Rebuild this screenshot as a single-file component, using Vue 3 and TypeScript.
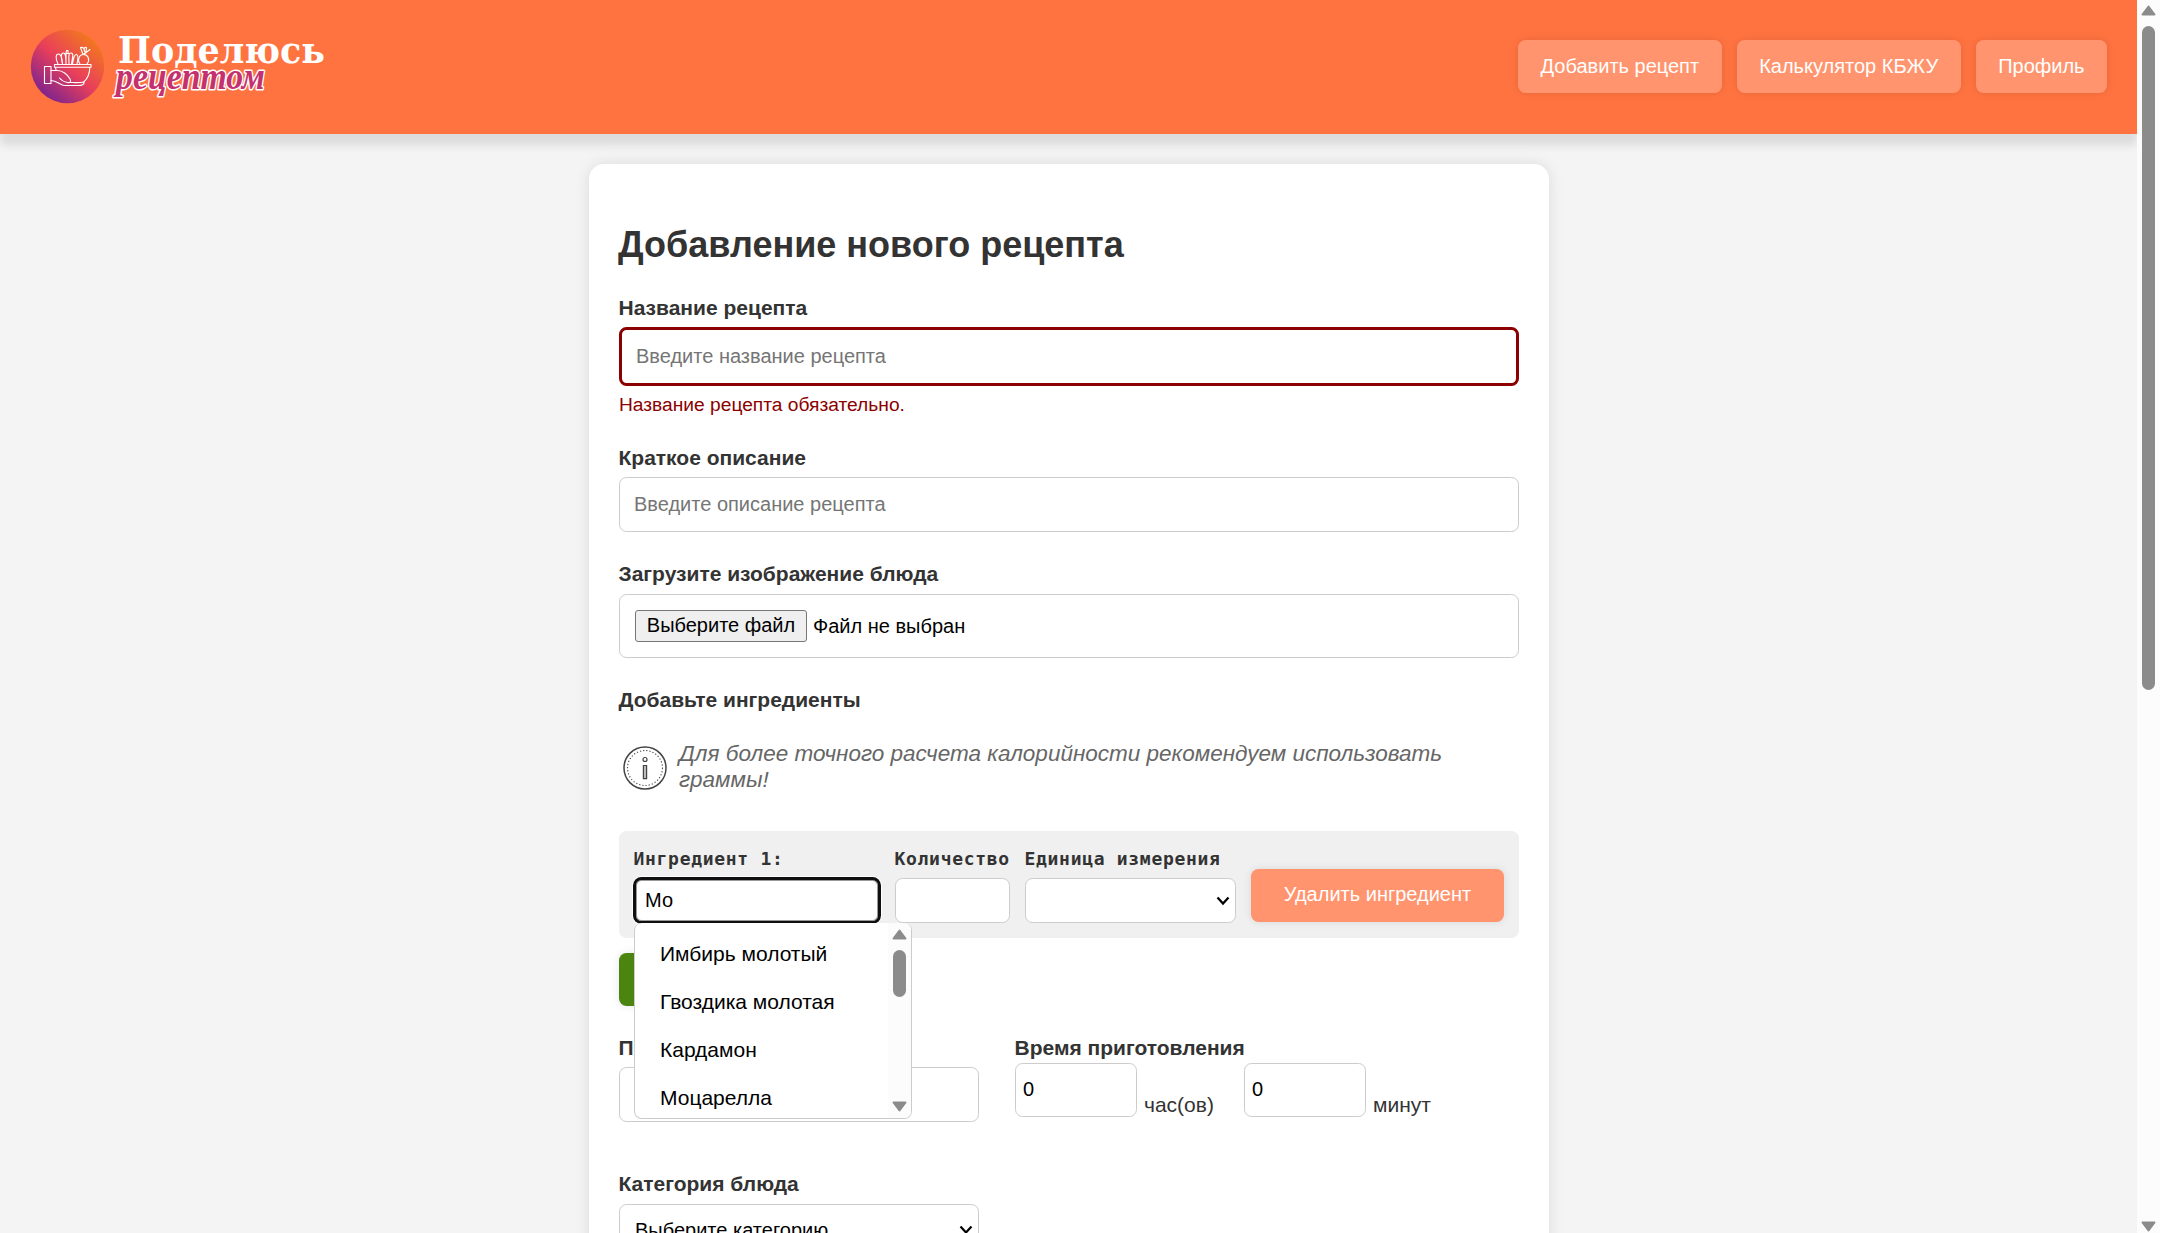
<script setup lang="ts">
import { ref } from 'vue'

const nav = ref<string[]>(['Добавить рецепт', 'Калькулятор КБЖУ', 'Профиль'])
const suggestions = ref<string[]>(['Имбирь молотый', 'Гвоздика молотая', 'Кардамон', 'Моцарелла'])
const query = ref('Мо')
const hours = ref('0')
const minutes = ref('0')
</script>

<template>
  <div class="window">
    <main class="page">
      <header class="header">
        <svg class="logo" width="310" height="84" viewBox="24 24 310 84">
          <defs>
            <linearGradient id="lg" x1="0.15" y1="0.9" x2="0.85" y2="0.1">
              <stop offset="0" stop-color="#7a2390" />
              <stop offset="0.5" stop-color="#e93f5a" />
              <stop offset="1" stop-color="#f27a1c" />
            </linearGradient>
          </defs>
          <circle cx="67.5" cy="66.5" r="36.7" fill="url(#lg)" />
          <g fill="none" stroke="#fff" stroke-width="1.1" stroke-linejoin="round" stroke-linecap="round">
            <path d="M44.500 66.500h6.500v17h-6.500z" />
            <path d="M51 70.500h6.500c5 0 10 4 12.500 8.500c1.500 3 0 4-2.500 3.500c-3-.5-6-2-8-4.500M51 80.500c6.500 0 9 5 14 5h13c4 0 6.500-1 6-3.500c-5 1-10 .5-15 .5" />
            <path d="M54.500 64.500h36.500v2.700H54.500zM55.500 67.200l.5 3M89.800 67.200c0 6-2 11-6 14.800" />
            <path d="M58 64c-3-6-2-10 .5-10s4 5 4 10M62.500 64c-2-7-1.500-11 1-11s2.500 5 2.500 11M66 64V53.500M66 53.500l.5-3h1.500v3M66 53.500h3M69 64c0-7-1-11 2-11s1.500 5 .5 11M72.500 64c1-6 2-10 4-9.500s1.500 5 .5 9.500" />
            <path d="M80 64c-3-4-1-9.500 3.500-9.500s7 5 3.500 9.500M83 54.500l-2.500-7c3-.5 4 1 4 4c-1-3 0-4.500 2-4c0 3-.5 5-3 7l6.500-5" />
          </g>
          <text class="brand" x="118" y="62.500" textLength="207" lengthAdjust="spacingAndGlyphs">Поделюсь</text>
          <text class="script" x="116" y="89" textLength="149" lengthAdjust="spacingAndGlyphs">рецептом</text>
        </svg>
        <nav class="nav">
          <a v-for="n in nav" :key="n" class="btn">{{ n }}</a>
        </nav>
      </header>

      <form class="card">
        <h2>Добавление нового рецепта</h2>

        <label>Название рецепта</label>
        <input class="field invalid" placeholder="Введите название рецепта" />
        <p class="error">Название рецепта обязательно.</p>

        <label>Краткое описание</label>
        <input class="field desc" placeholder="Введите описание рецепта" />

        <label>Загрузите изображение блюда</label>
        <div class="file"><span class="file-btn">Выберите файл</span><span class="file-name">Файл не выбран</span></div>

        <label class="ing-title">Добавьте ингредиенты</label>
        <div class="info">
          <svg width="46" height="46" viewBox="0 0 46 46" fill="none" stroke="#444">
            <circle cx="23" cy="23" r="21" stroke-width="1.500" />
            <circle cx="23" cy="23" r="17.500" stroke-width="1.100" stroke-dasharray="1.200 2" />
            <circle cx="23" cy="14.500" r="2" stroke-width="1.200" />
            <path d="M21.400 20.500h3.200v13.200h-3.200z" fill="#bbb" stroke-width="1.200" />
          </svg>
          <p>Для более точного расчета калорийности рекомендуем использовать граммы!</p>
        </div>

        <section class="row">
          <div class="col c1">
            <label>Ингредиент 1:</label>
            <input v-model="query" class="small focused" />
            <div class="menu">
              <ul>
                <li v-for="s in suggestions" :key="s">{{ s }}</li>
              </ul>
              <div class="bar">
                <svg width="15" height="11" viewBox="0 0 15 11"><path d="M7.500 1.500L13.500 9.500H1.500z" /></svg>
                <i class="thumb"></i>
                <svg width="15" height="11" viewBox="0 0 15 11"><path d="M7.500 9.500L13.500 1.500H1.500z" /></svg>
              </div>
            </div>
          </div>
          <div class="col c2">
            <label>Количество</label>
            <input class="small" />
          </div>
          <div class="col c3">
            <label>Единица измерения</label>
            <div class="small select">
              <svg width="14" height="10" viewBox="0 0 14 10"><path d="M1.500 1.500L7 7.500L12.500 1.500" /></svg>
            </div>
          </div>
          <button type="button" class="delete">Удалить ингредиент</button>
        </section>

        <button type="button" class="add" aria-label="Добавить ингредиент"></button>

        <section class="two">
          <div class="portions">
            <label>Порции</label>
            <input class="field" />
          </div>
          <div class="time">
            <label>Время приготовления</label>
            <div class="time-row">
              <input v-model="hours" class="num" /><span class="unit h">час(ов)</span>
              <input v-model="minutes" class="num" /><span class="unit">минут</span>
            </div>
          </div>
        </section>

        <label class="cat-label">Категория блюда</label>
        <div class="category">
          <span>Выберите категорию</span>
          <svg width="14" height="10" viewBox="0 0 14 10"><path d="M1.500 1.500L7 7.500L12.500 1.500" /></svg>
        </div>
      </form>
    </main>

    <aside class="page-bar">
      <svg width="15" height="11" viewBox="0 0 15 11"><path d="M7.500 1.500L13.500 9.500H1.500z" /></svg>
      <i class="page-thumb"></i>
      <svg class="down" width="15" height="11" viewBox="0 0 15 11"><path d="M7.500 9.500L13.500 1.500H1.500z" /></svg>
    </aside>
  </div>
</template>

<style>
html, body { margin: 0; overflow: hidden; }
</style>

<style scoped>
* { box-sizing: border-box; }
.window {
  display: flex;
  width: 2160px;
  height: 1233px;
  overflow: hidden;
  background: #f4f4f4;
  font-family: "Liberation Sans", Arial, sans-serif;
  font-size: 20px;
  color: #333;
}
.page { flex: 1; overflow: hidden; }
.header {
  height: 134px;
  display: flex;
  justify-content: space-between;
  padding: 0 30px 0 24px;
  background: #ff7340;
  box-shadow: 0 11px 9px rgba(0, 0, 0, .1);
}
.logo { margin-top: 24px; overflow: visible; }
.brand { font: 700 38px "DejaVu Serif", serif; fill: #fff; }
.script {
  font: italic 700 37px "Liberation Serif", serif;
  fill: #c4316e;
  stroke: #fff;
  stroke-width: 3px;
  paint-order: stroke;
  stroke-linejoin: round;
}
.nav { display: flex; gap: 15px; padding-top: 40px; }
.btn, .delete, .add {
  height: 53px;
  border: 0;
  border-radius: 7.5px;
  background: #ff946e;
  color: #fff;
  font: 20px/52px "Liberation Sans", Arial, sans-serif;
  text-align: center;
  box-shadow: 0 0 9px rgba(0, 0, 0, .1);
}
.btn { padding: 0 22.5px; white-space: nowrap; }
.card {
  width: 960px;
  height: 1200px;
  margin: 30px 0 0 589px;
  padding: 0 30px;
  border-radius: 15px;
  background: #fff;
  box-shadow: 0 0 15px rgba(0, 0, 0, .1);
}
h2 { margin: 0 0 0 -1px; padding-top: 60px; font-size: 36px; line-height: 41px; height: 132px; }
label { display: block; margin-left: -.5px; font-size: 21px; font-weight: 700; line-height: 24px; white-space: nowrap; }
input { display: block; font: 20px "Liberation Sans", Arial, sans-serif; color: #000; outline: 0; background: #fff; }
input::placeholder { color: #757575; opacity: 1; }
.field { width: 900px; height: 55px; border: 1px solid #ccc; border-radius: 7.5px; padding: 0 14px; margin-top: 7px; }
.invalid { height: 59px; border: 3px solid darkred; }
.error { margin: 7px 0 29px; font-size: 19.2px; line-height: 24px; color: darkred; }
.desc { margin-bottom: 30px; }
.file {
  display: flex;
  align-items: center;
  height: 64px;
  margin: 8px 0 30px;
  padding: 0 15px;
  border: 1px solid #ccc;
  border-radius: 7.5px;
  color: #000;
}
.file-btn { width: 172px; height: 32px; line-height: 29px; text-align: center; border: 1px solid #767676; border-radius: 3px; background: #efefef; }
.file-name { margin-left: 6px; }
.info { display: flex; align-items: flex-start; height: 86px; margin-top: 33px; padding-left: 3px; }
.info svg { flex: none; }
.info p { margin: -4px 0 0 11px; width: 800px; font-size: 22.5px; line-height: 26px; font-style: italic; color: #666; }
.row { position: relative; display: flex; height: 107px; padding: 15px; gap: 15px; background: #f0f0f0; border-radius: 7.5px; }
.row label { font-family: "DejaVu Sans Mono", monospace; font-size: 18px; letter-spacing: .7px; line-height: 26px; height: 32px; }
.c1 { width: 246px; position: relative; }
.c2 { width: 115px; }
.c3 { width: 211px; }
.small { width: 100%; height: 45px; border: 1px solid #ccc; border-radius: 7.5px; background: #fff; padding: 0 10px; }
.focused { border: 2px solid #101010; padding: 0 9px; box-shadow: 0 0 0 1px #101010, 0 0 0 2px #fff, inset 0 0 0 1px #999; }
.select { display: flex; align-items: center; justify-content: flex-end; padding: 0 5px; }
.select path, .category path { fill: none; stroke: #000; stroke-width: 2.2; }
.delete { width: 253px; margin-top: 23px; padding: 0 0 2px; line-height: 51px; }
.menu {
  position: absolute;
  z-index: 3;
  left: 0;
  top: 77px;
  width: 278px;
  height: 196px;
  display: flex;
  border: 1px solid #ccc;
  border-top: 0;
  border-radius: 7.5px;
  background: #fff;
  overflow: hidden;
}
ul { flex: 1; margin: 0; padding: 7px 0 0 25px; list-style: none; color: #000; font-size: 21px; }
li { height: 48px; line-height: 48px; }
.bar { width: 23px; background: #fcfcfc; display: flex; flex-direction: column; align-items: center; padding-top: 6px; }
.bar path, .page-bar path { fill: #8b8b8b; stroke: #8b8b8b; stroke-width: 2; stroke-linejoin: round; }
.thumb { width: 13px; height: 47px; border-radius: 7px; background: #8b8b8b; margin: 10px 0 104px; }
.bar svg, .page-bar svg { flex: none; }
.add { display: block; width: 270px; margin-top: 15px; background: #4b8510; }
.two { display: flex; height: 136px; margin-top: 30px; }
.portions { width: 396px; }
.portions .field { width: 360px; }
.time-row { display: flex; align-items: flex-start; margin-top: 3px; }
.num { width: 122px; height: 54px; padding: 0 7px 2px; border: 1px solid #ccc; border-radius: 7.5px; }
.unit { margin: 30px 0 0 7px; line-height: 23px; font-size: 21px; }
.h { width: 100px; }
.category { display: flex; justify-content: space-between; align-items: center; width: 360px; height: 55px; margin-top: 8px; padding: 0 5px 3px 15px; border: 1px solid #ccc; border-radius: 7.5px; color: #000; }
.page-bar { width: 23px; background: #fcfcfc; display: flex; flex-direction: column; align-items: center; padding-top: 5px; }
.page-thumb { width: 13px; height: 664px; margin-top: 10px; border-radius: 7px; background: #8b8b8b; }
.down { margin-top: 531px; }
</style>
